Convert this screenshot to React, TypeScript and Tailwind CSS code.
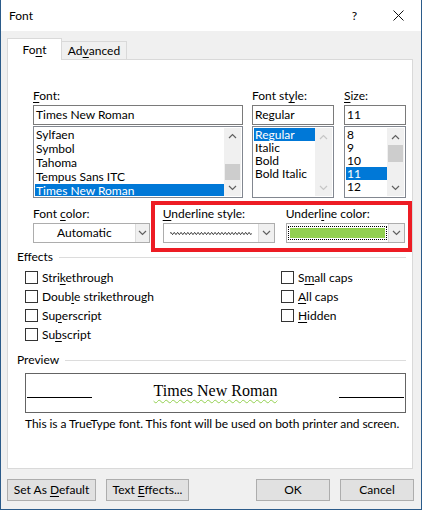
import React from "react";

const ui = "font-['Segoe_UI','Lato',sans-serif] text-[12px] text-black";

function Chevron({ up = false, color = "#606060" }: { up?: boolean; color?: string }) {
  return (
    <svg width="9" height="6" viewBox="0 0 9 6">
      <path d={up ? "M1 5 L4.5 1.5 L8 5" : "M1 1 L4.5 4.5 L8 1"} fill="none" stroke={color} strokeWidth="1.2" />
    </svg>
  );
}

function ScrollBar({ thumbTop, thumbH, disabled = false }: { thumbTop?: number; thumbH?: number; disabled?: boolean }) {
  const c = disabled ? "#c6c6c6" : "#606060";
  return (
    <div className="w-[17px] h-full bg-[#f0f0f0] flex flex-col shrink-0">
      <div className="h-[17px] flex items-center justify-center"><Chevron up color={c} /></div>
      <div className="flex-1">
        {thumbH ? <div className="mx-auto w-[15px] bg-[#cdcdcd]" style={{ marginTop: thumbTop, height: thumbH }} /> : null}
      </div>
      <div className="h-[17px] flex items-center justify-center"><Chevron color={c} /></div>
    </div>
  );
}

function ListBox({ items, selected, rowH, thumb, disabled }: { items: string[]; selected: number; rowH: string; thumb?: [number, number]; disabled?: boolean }) {
  return (
    <div className="mt-[1px] h-[72px] border border-[#828790] bg-white p-[1px] flex">
      <div className="flex-1 overflow-hidden">
        {items.map((it, i) => (
          <div key={it} className={`${rowH} pl-[1px] flex items-center whitespace-nowrap ${i === selected ? "bg-[#0078d7] text-white" : ""}`}>
            {it}
          </div>
        ))}
      </div>
      <ScrollBar thumbTop={thumb?.[0]} thumbH={thumb?.[1]} disabled={disabled} />
    </div>
  );
}

function Field({ value }: { value: string }) {
  return <div className="mt-[1px] h-[20px] border border-[#7a7a7a] bg-white flex items-center pl-[2px]">{value}</div>;
}

function Check({ children }: { children: React.ReactNode }) {
  return (
    <div className="h-[19px] flex items-center gap-[4px]">
      <div className="w-[13px] h-[13px] border border-[#333333] bg-white" />
      <span>{children}</span>
    </div>
  );
}

function DropBtn({ w }: { w: string }) {
  return <div className={`${w} h-full bg-[#f0f0f0] border-l border-[#dcdcdc] flex items-center justify-center shrink-0`}><Chevron /></div>;
}

function Wave() {
  let d = "M0 2.5";
  for (let x = 0; x < 81; x += 3.4) d += ` Q${x + 0.85} 0.5 ${x + 1.7} 2.5 Q${x + 2.55} 4.5 ${x + 3.4} 2.5`;
  return (
    <svg width="82" height="5" viewBox="0 0 82 5">
      <path d={d} fill="none" stroke="#111" strokeWidth="1" />
    </svg>
  );
}

export default function App() {
  return (
    <div className={`${ui} w-[422px] h-[510px] bg-[#f0f0f0] border-x border-b border-[#2b5b8a] flex flex-col overflow-hidden`}>
      {/* title bar */}
      <div className="h-[31px] bg-white flex items-center shrink-0">
        <span className="ml-[8px]">Font</span>
        <span className="ml-auto">?</span>
        <svg className="ml-[36px] mr-[17px]" width="11" height="11" viewBox="0 0 11 11">
          <path d="M0.5 0.5 L10.5 10.5 M10.5 0.5 L0.5 10.5" stroke="#111" strokeWidth="1" />
        </svg>
      </div>

      {/* tabs */}
      <div className="mt-[7px] ml-[6px] flex items-end h-[21px]">
        <div className="relative z-10 -mb-px w-[55px] h-[22px] bg-white border-x border-t border-[#d9d9d9] flex items-center justify-center">
          Fo<span className="underline underline-offset-2">n</span>t
        </div>
        <div className="w-[65px] h-[18px] bg-[#f0f0f0] border-t border-r border-[#d9d9d9] flex items-center justify-center pt-[1px]">
          Ad<span className="underline underline-offset-2">v</span>anced
        </div>
      </div>

      {/* panel */}
      <div className="ml-[6px] w-[406px] h-[410px] bg-white border border-[#d9d9d9] flex flex-col">
        <div className="mt-[28px] ml-[25px] flex">
          <div className="w-[210px]">
            <div className="leading-[16px]"><span className="underline underline-offset-2">F</span>ont:</div>
            <Field value="Times New Roman" />
            <ListBox
              items={["Sylfaen", "Symbol", "Tahoma", "Tempus Sans ITC", "Times New Roman"]}
              selected={4}
              rowH="h-[14px] leading-[14px]"
              thumb={[19, 16]}
            />
          </div>
          <div className="w-[82px] ml-[9px]">
            <div className="leading-[16px]">Font st<span className="underline underline-offset-2">y</span>le:</div>
            <Field value="Regular" />
            <ListBox items={["Regular", "Italic", "Bold", "Bold Italic"]} selected={0} rowH="h-[13px] leading-[13px]" disabled />
          </div>
          <div className="w-[62px] ml-[10px]">
            <div className="leading-[16px]"><span className="underline underline-offset-2">S</span>ize:</div>
            <Field value="11" />
            <ListBox items={["8", "9", "10", "11", "12"]} selected={3} rowH="h-[13px] leading-[13px]" thumb={[0, 17]} />
          </div>
        </div>

        <div className="mt-[3px] flex items-start">
          <div className="ml-[25px] w-[117px] mt-[5px]">
            <div className="leading-[16px]">Font <span className="underline underline-offset-2">c</span>olor:</div>
            <div className="mt-[1px] h-[20px] border border-[#adadad] bg-white flex">
              <div className="flex-1 flex items-center justify-center">Automatic</div>
              <DropBtn w="w-[14px]" />
            </div>
          </div>
          <div className="ml-[1px] w-[262px] h-[51px] border-4 border-[#ed1c24] pl-[8px] pt-[1px] flex relative z-10">
            <div className="w-[112px]">
              <div className="leading-[16px]"><span className="underline underline-offset-2">U</span>nderline style:</div>
              <div className="mt-[1px] h-[20px] border border-[#adadad] bg-white flex">
                <div className="flex-1 flex items-center pl-[6px]"><Wave /></div>
                <DropBtn w="w-[16px]" />
              </div>
            </div>
            <div className="w-[119px] ml-[11px]">
              <div className="leading-[16px]">Underl<span className="underline underline-offset-2">i</span>ne color:</div>
              <div className="mt-[1px] h-[20px] border border-[#adadad] bg-white flex">
                <div className="flex-1 flex items-center pl-[1px] pr-[1px]">
                  <div className="w-full h-[14px] border border-dotted border-black p-px">
                    <div className="w-full h-full bg-[#92d050]" />
                  </div>
                </div>
                <DropBtn w="w-[16px]" />
              </div>
            </div>
          </div>
        </div>

        {/* effects */}
        <div className="-mt-[3px] ml-[9px] mr-[6px] h-[16px] flex items-center">
          <span>Effects</span>
          <div className="flex-1 ml-[6px] h-px bg-[#dcdcdc]" />
        </div>
        <div className="mt-[3px] ml-[17px] grid grid-cols-[256px_1fr]">
          <div>
            <Check>Stri<span className="underline underline-offset-2">k</span>ethrough</Check>
            <Check>Doub<span className="underline underline-offset-2">l</span>e strikethrough</Check>
            <Check>Su<span className="underline underline-offset-2">p</span>erscript</Check>
            <Check>Su<span className="underline underline-offset-2">b</span>script</Check>
          </div>
          <div>
            <Check>S<span className="underline underline-offset-2">m</span>all caps</Check>
            <Check><span className="underline underline-offset-2">A</span>ll caps</Check>
            <Check><span className="underline underline-offset-2">H</span>idden</Check>
          </div>
        </div>

        {/* preview */}
        <div className="mt-[8px] ml-[9px] mr-[6px] h-[16px] flex items-center">
          <span>Preview</span>
          <div className="flex-1 ml-[6px] h-px bg-[#dcdcdc]" />
        </div>
        <div className="mt-[5px] ml-[17px] w-[381px] h-[40px] border border-[#646464] flex items-end pb-[14px] px-[1px]">
          <div className="w-[65px] h-px bg-black" />
          <div className="flex-1 text-center -mb-[3px]">
            <span className="font-['Times_New_Roman','Liberation_Serif',serif] text-[16px] leading-[16px] underline decoration-wavy decoration-[#92d050] decoration-1 underline-offset-[3px]">
              Times New Roman
            </span>
          </div>
          <div className="w-[65px] h-px bg-black" />
        </div>
        <div className="mt-[3px] ml-[17px] leading-[16px] tracking-[-0.06px]">
          This is a TrueType font. This font will be used on both printer and screen.
        </div>
      </div>

      {/* buttons */}
      <div className="mt-[10px] ml-[6px] flex">
        <button className="w-[89px] h-[22px] bg-[#e1e1e1] border border-[#adadad]">Set As <span className="underline underline-offset-2">D</span>efault</button>
        <button className="ml-[10px] w-[83px] h-[22px] bg-[#e1e1e1] border border-[#adadad]">Text <span className="underline underline-offset-2">E</span>ffects...</button>
        <button className="ml-[67px] w-[74px] h-[22px] bg-[#e1e1e1] border border-[#adadad]">OK</button>
        <button className="ml-[10px] w-[74px] h-[22px] bg-[#e1e1e1] border border-[#adadad]">Cancel</button>
      </div>
    </div>
  );
}
